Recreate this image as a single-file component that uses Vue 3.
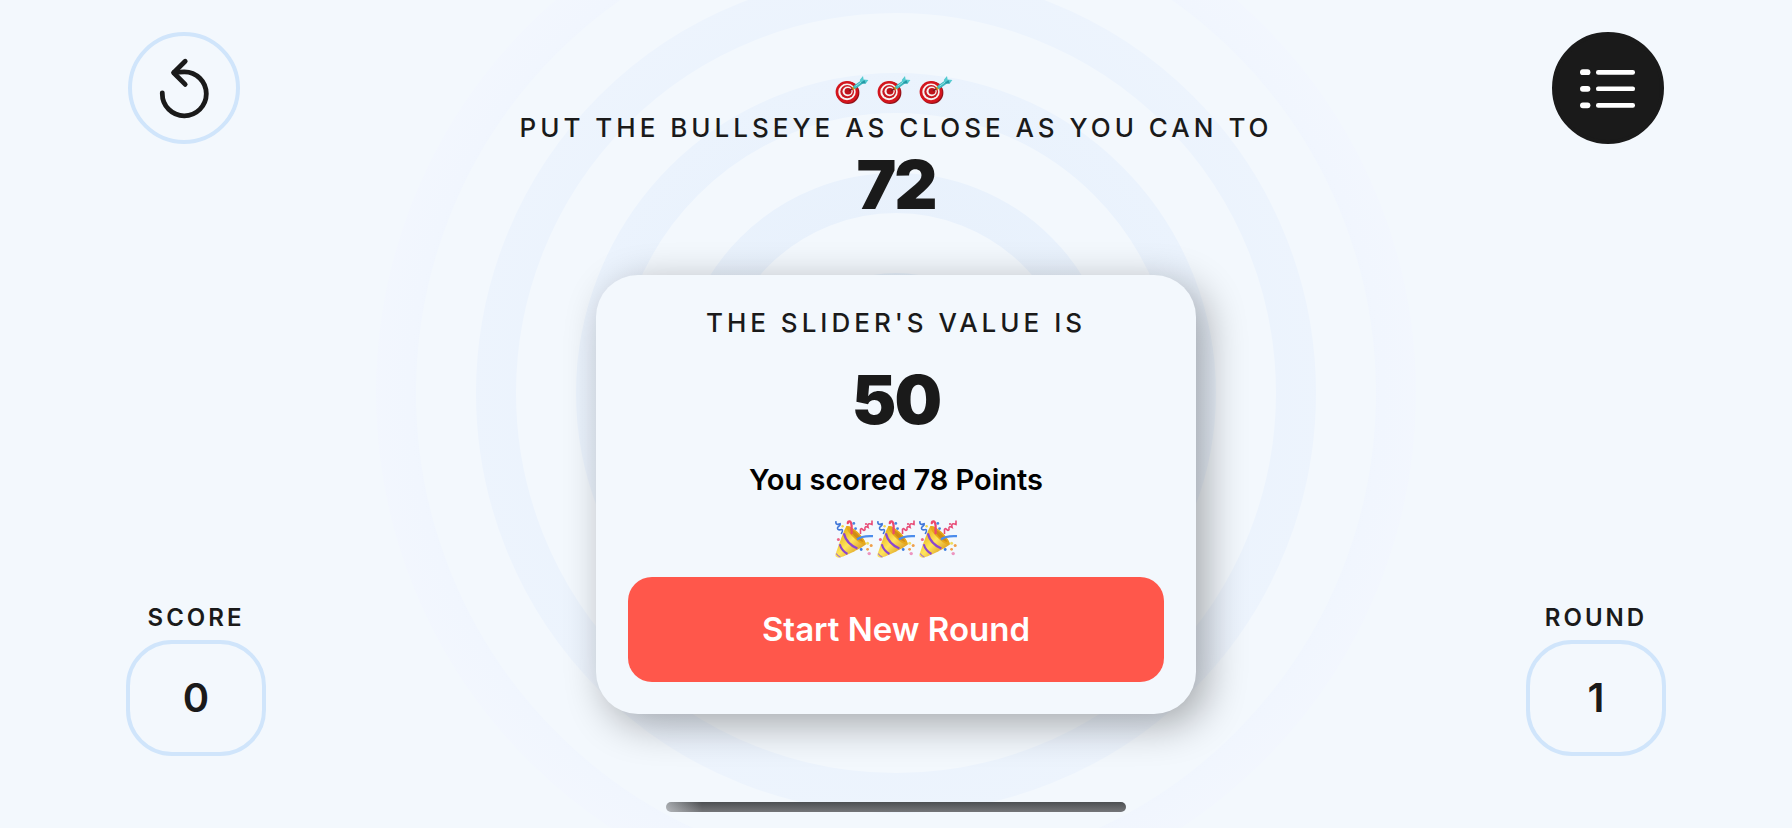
<script setup>
import { ref } from 'vue'

const target = ref(72)
const sliderValue = ref(50)
const points = ref(78)
const score = ref(0)
const round = ref(1)

const rings = [100, 200, 300, 400, 500]

function startNewRound() {
  score.value += points.value
  round.value += 1
  target.value = 1 + Math.floor(Math.random() * 100)
}

function restart() {
  score.value = 0
  round.value = 1
}
</script>

<template>
  <main class="game">
    <svg class="rings" width="1080" height="1080" viewBox="-540 -540 1080 1080" aria-hidden="true">
      <defs>
        <radialGradient id="ringFade" gradientUnits="userSpaceOnUse" cx="0" cy="0" r="540">
          <stop offset="0" stop-color="#e2effb" />
          <stop offset="0.3" stop-color="#e8f1fc" />
          <stop offset="0.6" stop-color="#ebf3fd" />
          <stop offset="0.8" stop-color="#edf4fd" />
          <stop offset="0.9" stop-color="#f1f6fe" />
          <stop offset="1" stop-color="#f3f7fe" />
        </radialGradient>
      </defs>
      <circle v-for="r in rings" :key="r" :r="r" fill="none" stroke="url(#ringFade)" stroke-width="40" />
    </svg>

    <aside class="side">
      <button class="round-btn" type="button" aria-label="Restart" @click="restart">
        <svg width="112" height="112" viewBox="0 0 112 112" fill="none" stroke="#1a1a1a" stroke-width="4.8" stroke-linecap="round" stroke-linejoin="round">
          <path d="M34.3 60.8V61.7A22 22 0 1 0 56.3 39.8C52 39.8 49 40.2 46 40.7" />
          <path d="M57.2 29.2L45.6 40.8L57.2 52.4" />
        </svg>
      </button>
      <section class="stat">
        <h2 class="stat-label">SCORE</h2>
        <p class="stat-value">{{ score }}</p>
      </section>
    </aside>

    <div class="center">
      <div class="emoji targets" role="img" aria-label="Three bullseyes">
        <svg v-for="n in 3" :key="n" width="38" height="30" viewBox="0 0 38 30">
          <ellipse cx="13" cy="17.8" rx="11.4" ry="11.2" fill="#8f1219" />
          <ellipse cx="12" cy="17" rx="11.4" ry="11" fill="#d3151d" />
          <ellipse cx="12" cy="16.9" rx="8.7" ry="8.4" fill="#f7f3f2" />
          <ellipse cx="12.2" cy="16.7" rx="6.9" ry="6.6" fill="#c91720" />
          <ellipse cx="12.6" cy="16.4" rx="5.1" ry="4.8" fill="#f7f3f2" />
          <ellipse cx="13" cy="16.2" rx="3.4" ry="3.2" fill="#bd121b" />
          <path d="M14 15.9L19.5 12.4" stroke="#7c1620" stroke-width="1.4" />
          <path d="M17.5 13.8L20.3 12" stroke="#d99a13" stroke-width="3" />
          <path d="M20 12L27 7" stroke="#3fb9c0" stroke-width="3.4" stroke-linecap="round" />
          <path d="M25.2 8.4L24.9 4.8L28 1.1L28.6 4.6L33.4 5L30.8 8.4Z" fill="#55cbd0" />
          <path d="M25 8.5L29.4 4.9L30.8 8.4Z" fill="#2599a6" />
          <path d="M20.5 11.2L26 7.2" stroke="#91e2e2" stroke-width="1" />
        </svg>
      </div>
      <p class="caption">PUT THE BULLSEYE AS CLOSE AS YOU CAN TO</p>
      <p class="big">{{ target }}</p>

      <section class="card">
        <p class="caption card-caption">THE SLIDER'S VALUE IS</p>
        <p class="big card-value">{{ sliderValue }}</p>
        <p class="result">You scored {{ points }} Points</p>
        <div class="emoji" role="img" aria-label="Three party poppers">
          <svg v-for="n in 3" :key="n" width="38" height="38" viewBox="0 0 38 38">
            <defs>
              <linearGradient id="cone" x1="0" y1="0" x2="1" y2="1">
                <stop offset="0.2" stop-color="#e9b51e" />
                <stop offset="0.5" stop-color="#ffe55c" />
                <stop offset="0.85" stop-color="#d9961c" />
              </linearGradient>
            </defs>
            <path d="M11.5 7C15.5 5.5 31.5 20.5 30.6 25.5C29.5 27.5 10 37.5 4.5 38.6C1.5 39 0 37.5 0.5 35.6C2.5 29 9.5 9.5 11.5 7Z" fill="url(#cone)" />
            <path d="M11.5 7C17 5.8 31.5 20 30.6 25.5C26 27.5 10 12 11.5 7Z" fill="#e7a81a" />
            <path d="M15 10C20 12 26 17.5 28.5 23C24 22.5 16.5 15.5 15 10Z" fill="#d08c15" />
            <path d="M8.8 14.4C10.5 21 16 26.8 22.4 29.5" fill="none" stroke="#8b46cf" stroke-width="2.3" />
            <path d="M4.7 25.2C6 29.5 9 33 12.5 35" fill="none" stroke="#8b46cf" stroke-width="2.1" />
            <path d="M1.2 34.5C2.3 36.4 4 37.8 5.4 38.2" fill="none" stroke="#a877c7" stroke-width="1.2" />
            <path d="M12.8 4.2C12.9 1.5 16.2 1.5 16.6 6.5L16.6 14.3" fill="none" stroke="#ee496c" stroke-width="2.3" stroke-linecap="round" />
            <path d="M22 20.5C25.5 17.6 31.5 16.8 38 17.2" fill="none" stroke="#4b8cec" stroke-width="2.3" />
            <path d="M1 2.2C0.2 5.8 3 5.7 5.2 4.8C6.2 7.5 0.8 7.7 3 10.4C5 12 7.8 8.8 7.4 12.2L6.2 15" fill="none" stroke="#4177d8" stroke-width="1.6" />
            <path d="M25.5 15V10.4C28 7.8 27.6 13.2 30 10.7C29.5 7.5 30.7 7 33.1 8.4C32 4.4 34 4.3 37 5.4V1.5" fill="none" stroke="#e84c77" stroke-width="1.6" />
            <circle cx="18.8" cy="4.4" r="1.4" fill="#4886df" />
            <circle cx="20.6" cy="9.6" r="1.4" fill="#4886df" />
            <circle cx="7.6" cy="7.3" r="1.2" fill="#f4d74c" />
            <circle cx="3.4" cy="20.6" r="1.5" fill="#ec6689" />
            <circle cx="31" cy="5" r="1.1" fill="#e84c77" />
            <circle cx="32.6" cy="24.2" r="1.5" fill="#f0dd60" />
            <circle cx="36.2" cy="26.4" r="1.5" fill="#efa04b" />
            <circle cx="32.6" cy="30.3" r="1.4" fill="#f0a049" />
            <circle cx="26.2" cy="30.5" r="1.4" fill="#3e7de0" />
            <circle cx="34.2" cy="34.6" r="1.7" fill="#ed94c0" />
          </svg>
        </div>
        <button class="primary" type="button" @click="startNewRound">Start New Round</button>
      </section>
    </div>

    <aside class="side side-right">
      <button class="round-btn filled" type="button" aria-label="Leaderboard">
        <svg width="112" height="112" viewBox="0 0 112 112" fill="#fff">
          <rect x="28" y="37.3" width="10.4" height="5.8" rx="2.9" />
          <rect x="44" y="38" width="39" height="4.7" rx="2.2" />
          <rect x="28" y="53.9" width="10.4" height="5.8" rx="2.9" />
          <rect x="44" y="54.4" width="39" height="4.7" rx="2.2" />
          <rect x="28" y="70.4" width="10.4" height="5.8" rx="2.9" />
          <rect x="44" y="71" width="39" height="4.7" rx="2.2" />
        </svg>
      </button>
      <section class="stat">
        <h2 class="stat-label">ROUND</h2>
        <p class="stat-value">{{ round }}</p>
      </section>
    </aside>

    <div class="home-indicator"></div>
  </main>
</template>

<style>
body {
  margin: 0;
  background: #f3f8fd;
}
</style>

<style scoped>
.game {
  position: relative;
  display: flex;
  justify-content: space-between;
  box-sizing: border-box;
  min-height: 100vh;
  padding: 32px 126px 72px;
  overflow: hidden;
  background: #f3f8fd;
  color: #1a1a1a;
  font-family: Inter, "Liberation Sans", sans-serif;
}

p,
h2 {
  margin: 0;
}

svg {
  display: block;
}

.rings {
  position: absolute;
  top: -147px;
  left: calc(50% - 540px);
}

.side {
  position: relative;
  display: flex;
  flex-direction: column;
  justify-content: space-between;
  align-items: flex-start;
}

.side-right {
  align-items: flex-end;
}

.round-btn {
  display: grid;
  place-items: center;
  box-sizing: border-box;
  width: 112px;
  height: 112px;
  margin: 0 2px;
  padding: 0;
  border: 4px solid #d0e5fb;
  border-radius: 50%;
  background: transparent;
}

.round-btn svg {
  margin: -4px;
}

.round-btn.filled {
  border-color: #1a1a1a;
  background: #1a1a1a;
}

.stat {
  display: flex;
  flex-direction: column;
  align-items: center;
  gap: 6px;
}

.stat-label {
  font-size: 24px;
  line-height: 32px;
  font-weight: 600;
  letter-spacing: 3px;
}

.stat-value {
  box-sizing: border-box;
  width: 140px;
  border: 4px solid #d0e5fb;
  border-radius: 46px;
  font-size: 40px;
  line-height: 108px;
  font-weight: 600;
  text-align: center;
}

.center {
  position: relative;
  display: flex;
  flex-direction: column;
  align-items: center;
  padding-top: 43px;
  margin-bottom: -72px;
}

.emoji {
  display: flex;
  gap: 4px;
}

.emoji svg {
  overflow: visible;
}

.targets {
  margin-bottom: 6px;
}

.caption {
  font-size: 26px;
  line-height: 34px;
  font-weight: 500;
  letter-spacing: 4px;
  white-space: nowrap;
}

.big {
  font-size: 67px;
  line-height: 80px;
  font-weight: 900;
  letter-spacing: -2px;
}

.card {
  display: flex;
  flex-direction: column;
  align-items: center;
  gap: 20px;
  box-sizing: border-box;
  width: 600px;
  margin-top: 50px;
  padding: 32px;
  border-radius: 42px;
  background: #f3f8fd;
  box-shadow: 10px 10px 40px rgba(0, 0, 0, 0.33);
}

.card-caption {
  line-height: 32px;
}

.card-value {
  line-height: 82px;
}

.result {
  color: #000;
  font-size: 29px;
  line-height: 38px;
  font-weight: 600;
}

.primary {
  align-self: stretch;
  padding: 0;
  border: 0;
  border-radius: 24px;
  background: #ff574b;
  color: #fff;
  font-family: inherit;
  font-size: 33px;
  line-height: 105px;
  font-weight: 600;
}

.home-indicator {
  position: absolute;
  bottom: 16px;
  left: calc(50% - 230px);
  width: 460px;
  height: 10px;
  border-radius: 5px;
  background:
    linear-gradient(90deg, rgba(243, 248, 253, 0.5), rgba(243, 248, 253, 0) 36px),
    linear-gradient(#4c4f52, #757679);
}
</style>
